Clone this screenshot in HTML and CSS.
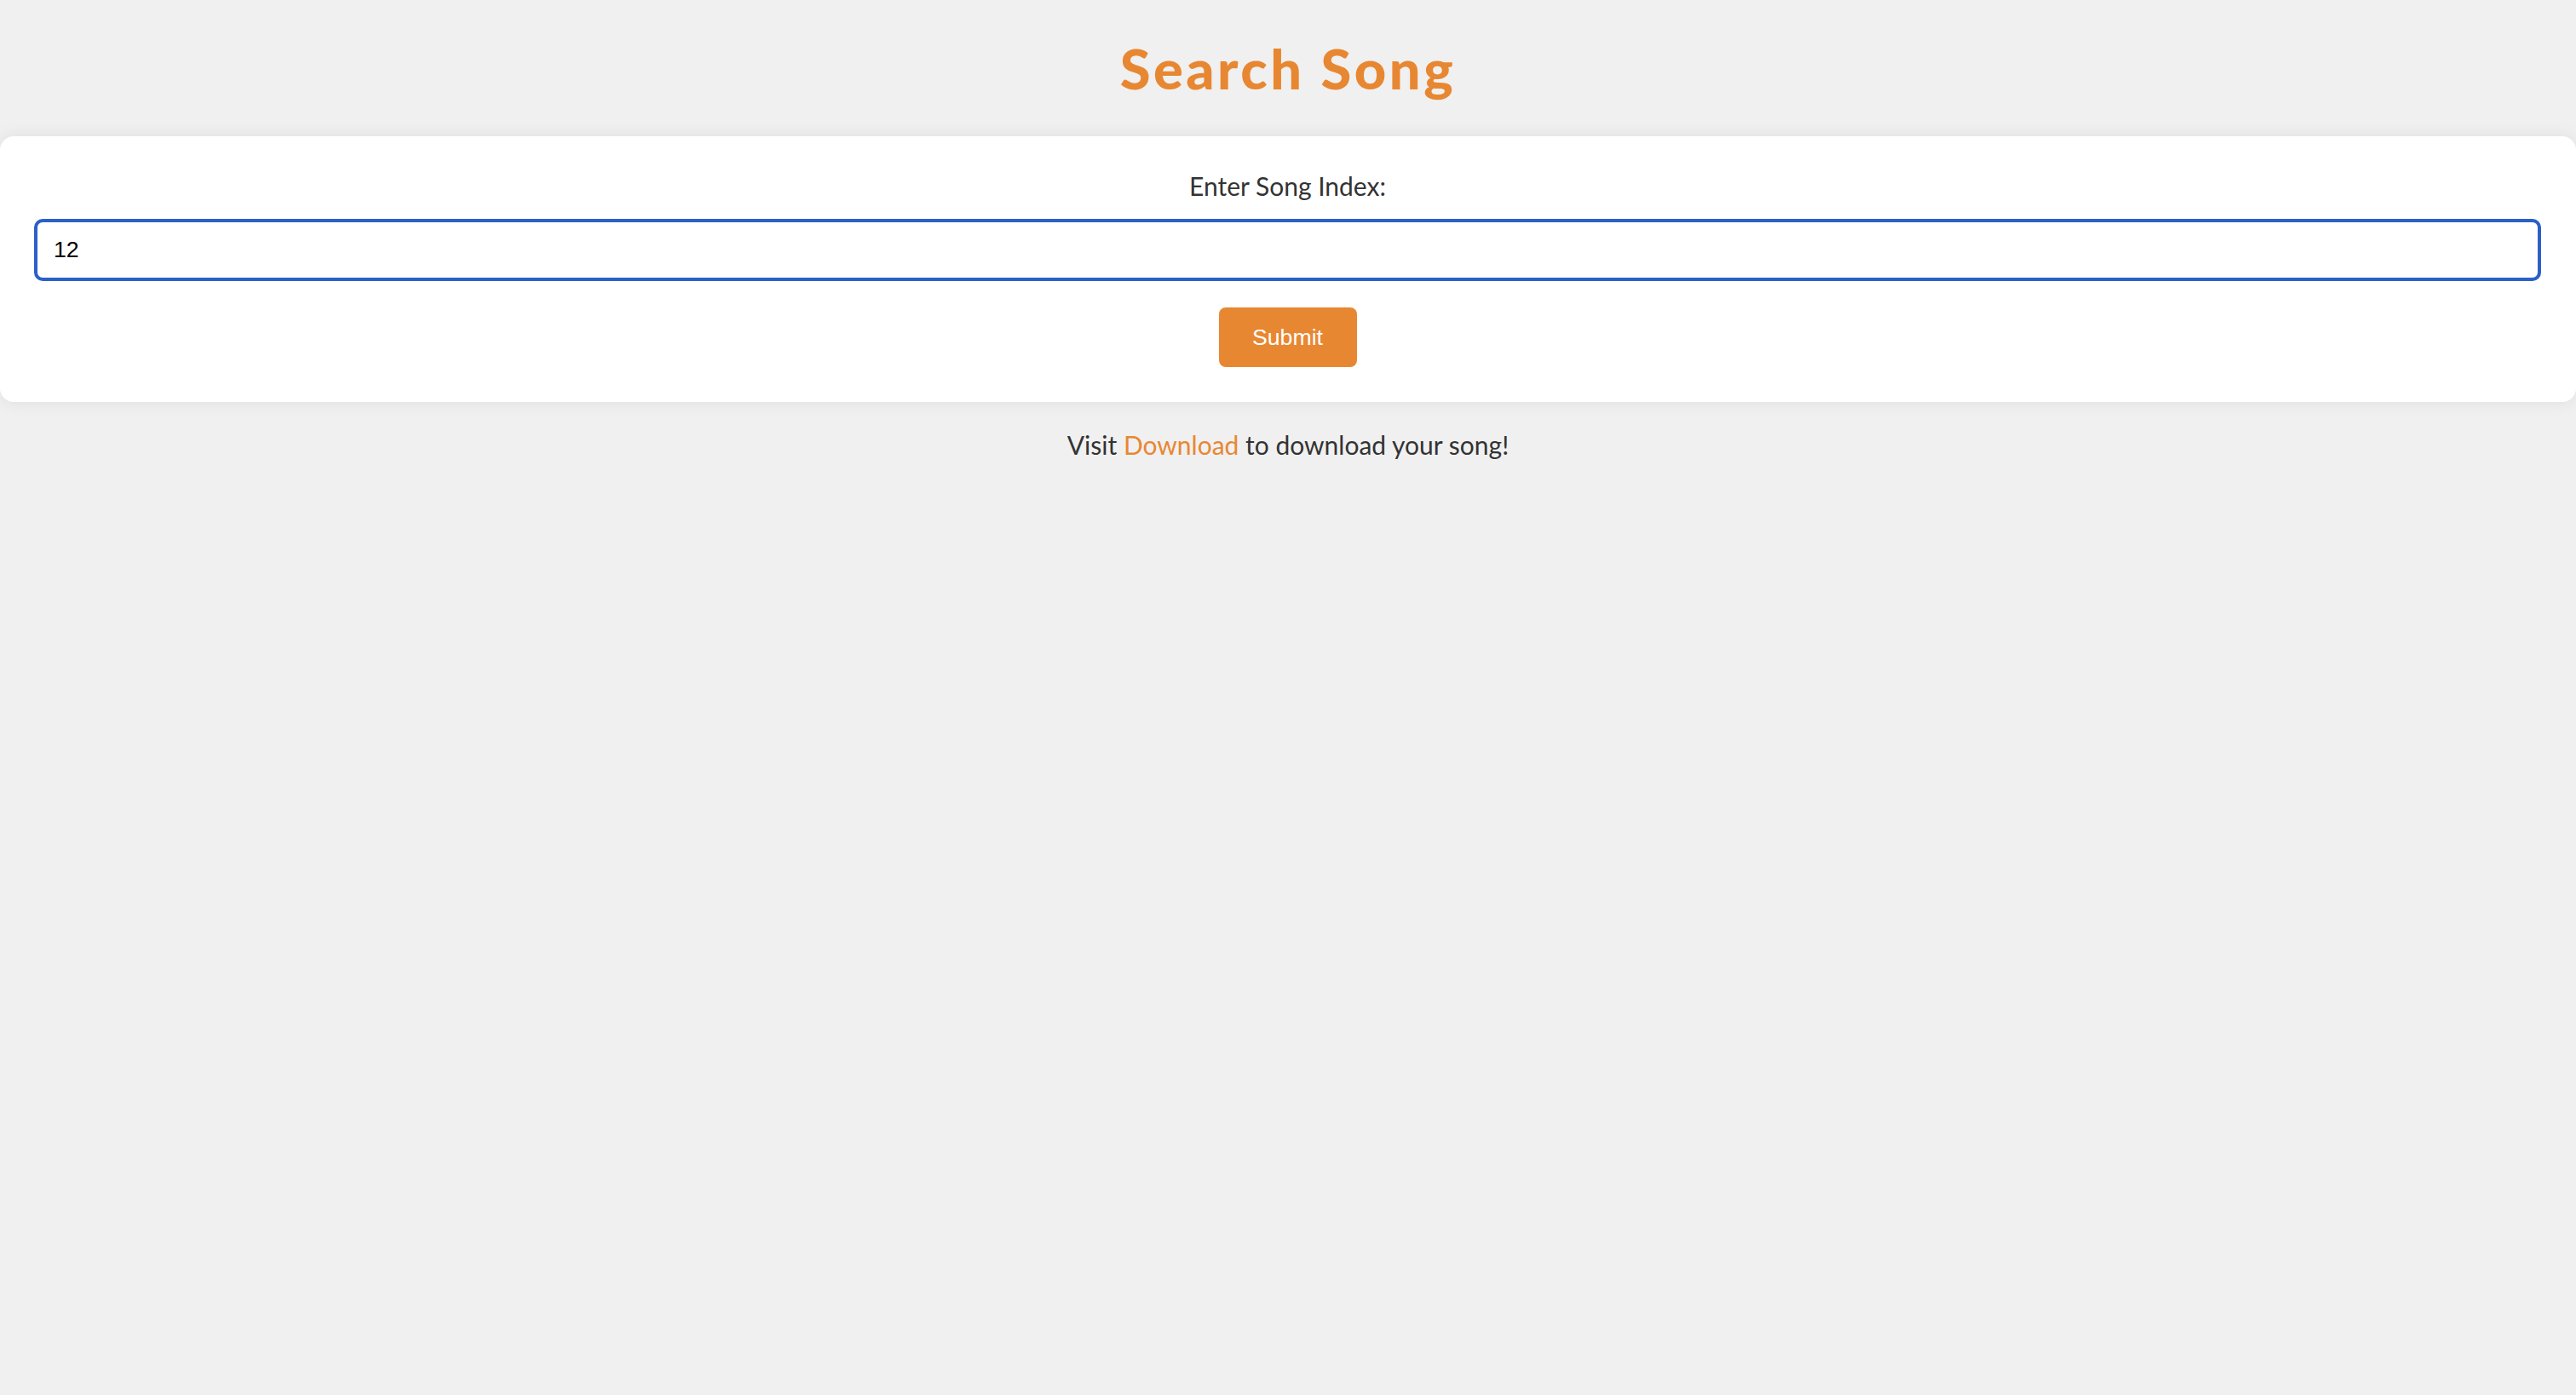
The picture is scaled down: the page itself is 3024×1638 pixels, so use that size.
FILE: index.html
```html
<!DOCTYPE html>
<html lang="en">
<head>
<meta charset="utf-8">
<title>Search Song</title>
<link rel="stylesheet" href="styles.css">
</head>
<body>
  <h1 class="title">Search Song</h1>
  <form class="card">
    <label class="label" for="idx">Enter Song Index:</label>
    <input class="field" id="idx" type="text" value="12" autofocus>
    <button class="submit" type="button">Submit</button>
  </form>
  <p class="note">Visit <a class="link" href="#">Download</a> to download your song!</p>
</body>
</html>
```
FILE: styles.css
```css
html, body {
  margin: 0;
  padding: 0;
  background: #f0f0f0;
}
body {
  font-family: "Lato", "Open Sans", sans-serif;
  color: #333333;
  display: flex;
  flex-direction: column;
}
.title {
  margin: 0;
  padding-top: 40px;
  font-size: 65px;
  line-height: 80px;
  font-weight: 900;
  letter-spacing: 3.5px;
  color: #e88732;
  text-align: center;
}
.card {
  margin: 40px 0 0 0;
  background: #ffffff;
  border-radius: 16px;
  box-shadow: 0 0 20px rgba(0, 0, 0, 0.08);
  padding: 38px 41px 41px 40px;
  display: flex;
  flex-direction: column;
  align-items: center;
}
.label {
  font-size: 30px;
  line-height: 40px;
  color: #333333;
}
.field {
  box-sizing: border-box;
  width: 100%;
  height: 73px;
  margin-top: 19px;
  border: 4px solid #2b60c8;
  border-radius: 10px;
  padding: 0 19px;
  font-family: "Liberation Sans", Arial, sans-serif;
  font-size: 26.67px;
  color: #000000;
  caret-color: #000000;
  outline: none;
  background: #ffffff;
}
.submit {
  margin-top: 31px;
  width: 162px;
  height: 70px;
  border: none;
  border-radius: 8px;
  background: #e88732;
  color: #ffffff;
  font-family: "Liberation Sans", Arial, sans-serif;
  font-size: 26.67px;
  padding: 0;
}
.note {
  margin: 30px 0 0 0;
  font-size: 30px;
  line-height: 40px;
  text-align: center;
}
.link {
  color: #e88732;
  text-decoration: none;
}
```
